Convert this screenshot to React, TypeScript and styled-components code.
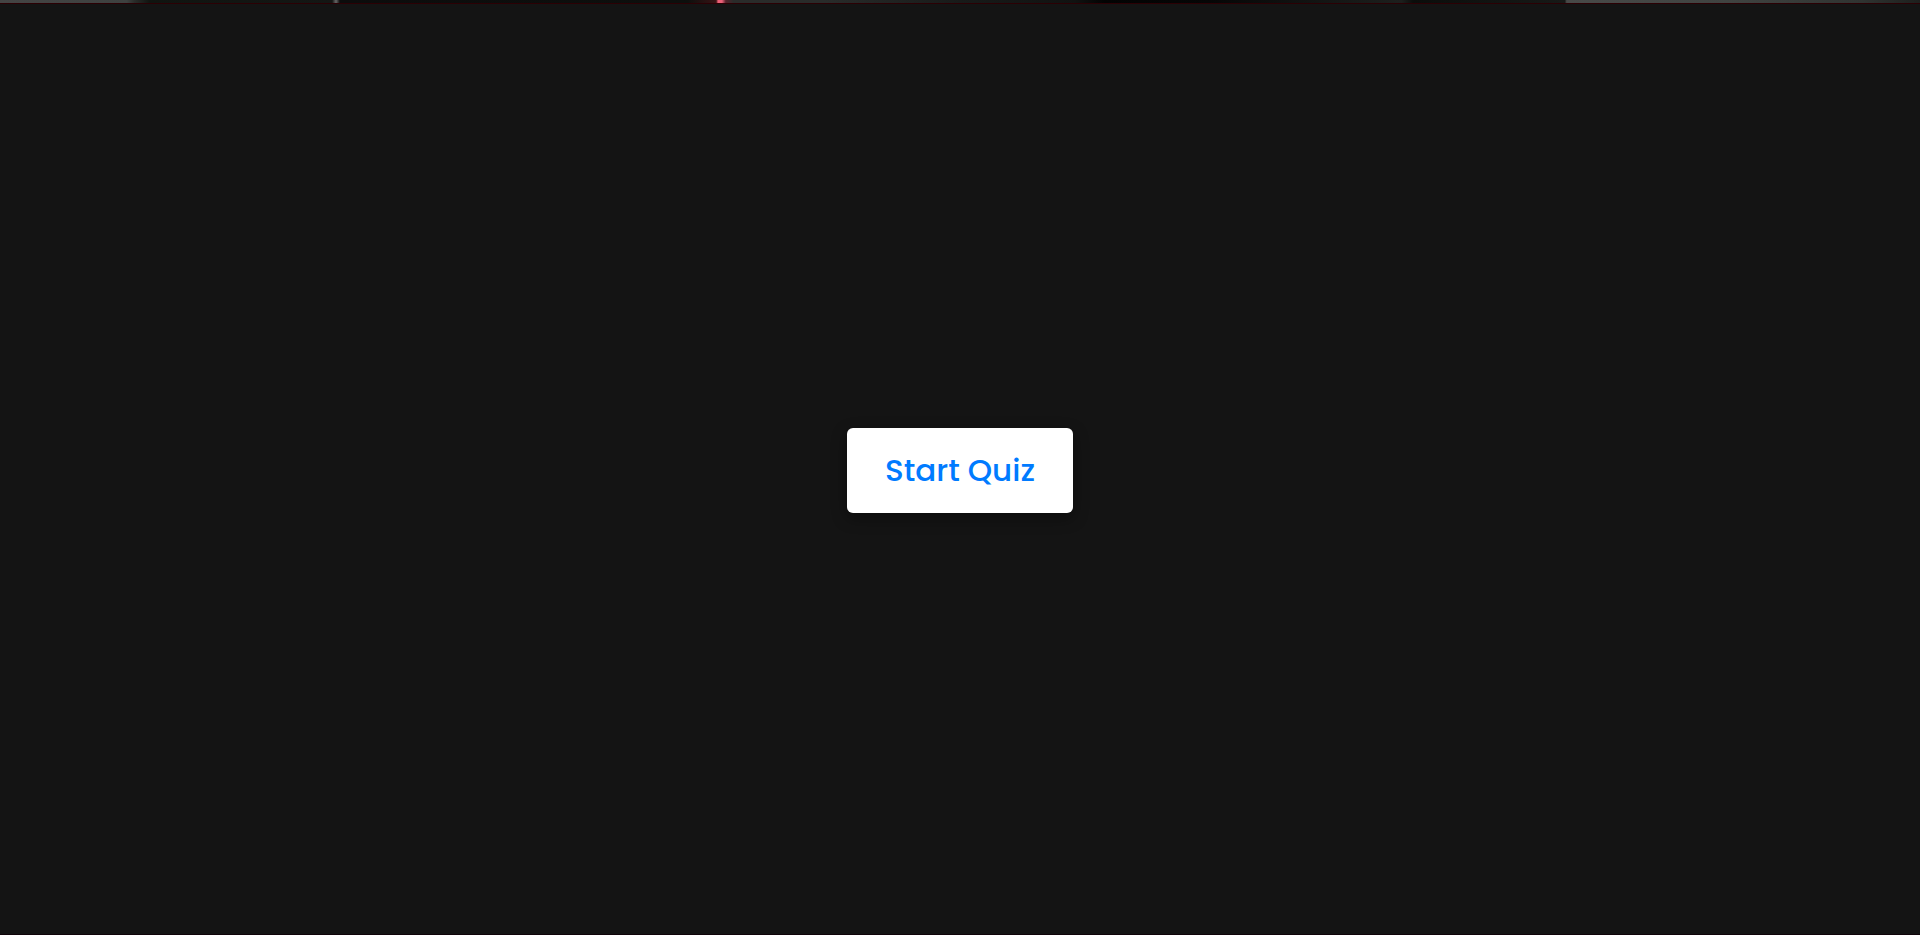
import React from "react";
import styled, { createGlobalStyle } from "styled-components";

const GlobalStyle = createGlobalStyle`
  *, *::before, *::after { box-sizing: border-box; }
  body { margin: 0; background: #141414; }
`;

const Page = styled.div`
  display: flex;
  flex-direction: column;
  min-height: 100vh;
  font-family: Poppins, Inter, sans-serif;
`;

/* Lower edge of the hero photograph, closed by a thin dark red rule. */
const HeroEdge = styled.header`
  flex: none;
  height: 4px;
  border-bottom: 1px solid #2b0004;
  background: linear-gradient(
    to right,
    #444444 0%,
    #3e4140 6.6%,
    #2a2c2a 7%,
    #101410 7.8%,
    #141614 17.3%,
    #666666 17.5%,
    #0c0c0c 17.7%,
    #0d0f0d 35.8%,
    #351314 37.2%,
    #3a1416 37.3%,
    #ee6075 37.4%,
    #e86078 37.6%,
    #54202a 37.8%,
    #2a2b2a 38.2%,
    #292b2a 43%,
    #181a19 50%,
    #111211 56%,
    #030303 57.5%,
    #060606 63%,
    #1d1f1d 73%,
    #0b0d0b 73.6%,
    #171917 81.5%,
    #484948 81.6%,
    #404341 90%,
    #303331 97%,
    #1d1f1d 100%
  );
`;

const QuizSection = styled.main`
  flex: 1;
  display: flex;
  align-items: center;
  justify-content: center;
  padding-top: 3px;
  border-bottom: 1px solid #10040a;
  background: #141414;
`;

const StartButton = styled.button`
  min-width: 226px;
  padding: 20px 36px;
  border: 0;
  border-radius: 6px;
  background: #ffffff;
  color: #007bff;
  font: inherit;
  font-size: 31px;
  font-weight: 500;
  line-height: 45px;
  white-space: nowrap;
  cursor: pointer;
  box-shadow: 0 5px 15px rgba(0, 0, 0, 0.4);
`;

export default function App() {
  return (
    <Page>
      <GlobalStyle />
      <HeroEdge />
      <QuizSection>
        <StartButton type="button">Start Quiz</StartButton>
      </QuizSection>
    </Page>
  );
}
